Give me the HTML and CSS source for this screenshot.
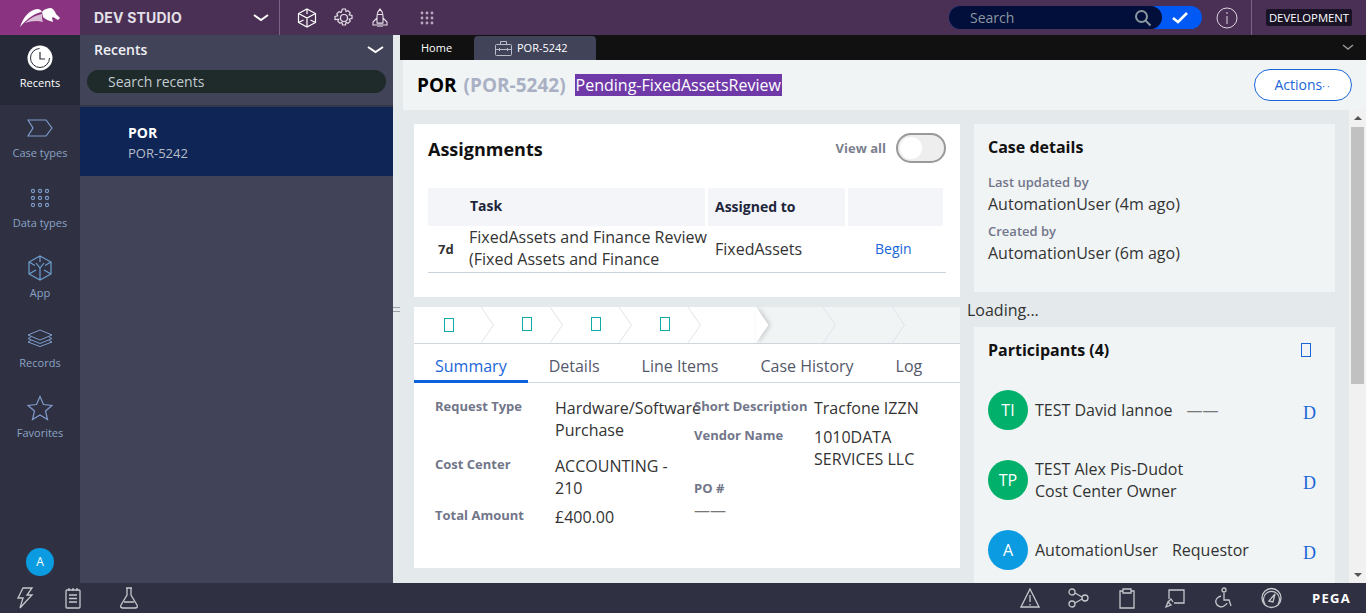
FILE: index.html
```html
<!DOCTYPE html>
<html lang="en">
<head>
	<meta charset="UTF-8">
	<title>POR-5242</title>
	<link rel="stylesheet" href="styles.css">
</head>
<body>
	<header class="topbar">
		<div class="logo">
			<svg width="40" height="20" viewBox="0 0 40 20"><path fill="#fff" d="M0 19C3 10 9 2 17 1c3 0 4 1 5 3-7 1-14 6-22 15z"/><path fill="#d9bcd6" d="M5 15c5-5 11-8 17-9 0 3 0 6 1 8-6-2-12-1-18 1z"/><path fill="#fff" d="M22 4c2-3 6-4 9-4 3 1 4 4 5 6l4 4-2 2-5-3-1 1 1 4c-4-1-8-3-10-5z"/></svg>
		</div>
		<div class="studio">
			<span class="studio-name">DEV STUDIO</span>
			<svg class="chev" width="16" height="8" viewBox="0 0 16 8"><path fill="none" stroke="#fff" stroke-width="2" d="M1 1l7 5 7-5"/></svg>
		</div>
		<div class="top-icons">
			<svg width="20" height="20" viewBox="0 0 20 20" fill="none" stroke="#fff" stroke-width="1.2"><path d="M10 1l8.5 4.5v9L10 19l-8.5-4.500v-9zM1.500 5.500L10 10l8.500-4.500M10 1v5M10 10v9M1.500 14.500l5-2.500M18.500 14.500l-5-2.500"/></svg>
			<svg width="20" height="20" viewBox="0 0 20 20" fill="none" stroke="#e8e0ea" stroke-width="1.2"><circle cx="10" cy="10" r="3.500"/><path d="M8.500 1h3l.5 2.500 2-.8 2.200 2.200-1 2 2.800.6v3l-2.800.6 1 2-2.200 2.200-2-1-.5 2.700h-3l-.5-2.700-2 1-2.200-2.200 1-2L1 11.500v-3l2.800-.6-1-2L5 3.700l2 .8z"/></svg>
			<svg width="18" height="20" viewBox="0 0 18 20" fill="none" stroke="#e8e0ea" stroke-width="1.100"><path d="M9 1c2 2 3 4 3 7v7H6V8c0-3 1-5 3-7zM6 10l-4 4v3h4M12 10l4 4v3h-4M7 15v4M11 15v4M9 15v4M6.500 6.500h5"/></svg>
		</div>
		<svg class="apps" width="14" height="14" viewBox="0 0 14 14" fill="#b9a9c0"><circle cx="2" cy="2" r="1.400"/><circle cx="7" cy="2" r="1.400"/><circle cx="12" cy="2" r="1.400"/><circle cx="2" cy="7" r="1.400"/><circle cx="7" cy="7" r="1.400"/><circle cx="12" cy="7" r="1.400"/><circle cx="2" cy="12" r="1.400"/><circle cx="7" cy="12" r="1.400"/><circle cx="12" cy="12" r="1.400"/></svg>
		<div class="top-search">
			<div class="top-search-box">
				<span>Search</span>
				<svg width="18" height="18" viewBox="0 0 18 18" fill="none" stroke="#8c97a0" stroke-width="2"><circle cx="7.500" cy="7.500" r="5.500"/><path d="M11.500 11.500l5 5"/></svg>
			</div>
			<svg class="top-search-check" width="16" height="12" viewBox="0 0 16 12" fill="none" stroke="#fff" stroke-width="2.600"><path d="M1 6l5 4 9-9"/></svg>
		</div>
		<svg class="info" width="22" height="22" viewBox="0 0 22 22" fill="none" stroke="#ddd5e0" stroke-width="1"><circle cx="11" cy="11" r="10"/><path d="M11 9v8M11 5v2"/></svg>
		<div class="env"><span>DEVELOPMENT</span></div>
	</header>

	<div class="middle">
		<nav class="rail">
			<a class="rail-item active">
				<svg width="26" height="26" viewBox="0 0 26 26"><circle cx="13" cy="13" r="12.500" fill="#fff"/><circle cx="13" cy="13" r="9.500" fill="none" stroke="#2a2e3c" stroke-width="1" stroke-dasharray="44 16"/><path fill="none" stroke="#2a2e3c" stroke-width="1.200" d="M13 7v7h5"/></svg>
				<span>Recents</span>
			</a>
			<a class="rail-item">
				<svg width="26" height="18" viewBox="0 0 26 18" fill="none" stroke="#7f9ccc" stroke-width="1.200"><path d="M1 1h18l6 8-6 8H1l5-8z"/></svg>
				<span>Case types</span>
			</a>
			<a class="rail-item">
				<svg width="20" height="20" viewBox="0 0 20 20" fill="none" stroke="#7f9ccc" stroke-width="1.100"><circle cx="3" cy="3" r="1.600"/><circle cx="10" cy="3" r="1.600"/><circle cx="17" cy="3" r="1.600"/><circle cx="3" cy="10" r="1.600"/><circle cx="10" cy="10" r="1.600"/><circle cx="17" cy="10" r="1.600"/><circle cx="3" cy="17" r="1.600"/><circle cx="10" cy="17" r="1.600"/><circle cx="17" cy="17" r="1.600"/></svg>
				<span>Data types</span>
			</a>
			<a class="rail-item">
				<svg width="26" height="26" viewBox="0 0 26 26" fill="none" stroke="#6e9ed0" stroke-width="1.200"><path d="M13 1l11 6v12l-11 6-11-6V7zM2 7l6 3.500M24 7l-6 3.500M13 1v6M13 13v12M2 19l7-4M24 19l-7-4M9 8l4 5 4-5"/></svg>
				<span>App</span>
			</a>
			<a class="rail-item">
				<svg width="26" height="18" viewBox="0 0 26 18" fill="none" stroke="#7f9ccc" stroke-width="1"><path d="M13 1l12 5-12 5L1 6zM4 8L1 9.500l12 5 12-5L22 8M4 11.500L1 13l12 4.500L25 13l-3-1.500"/></svg>
				<span>Records</span>
			</a>
			<a class="rail-item">
				<svg width="26" height="25" viewBox="0 0 26 25" fill="none" stroke="#7f9ccc" stroke-width="1.200"><path d="M13 1l3.500 8 8.500 1-6.500 5.500 2 8.500-7.500-4.500L5.500 24l2-8.500L1 10l8.500-1z"/></svg>
				<span>Favorites</span>
			</a>
			<div class="rail-user">A</div>
		</nav>

		<aside class="panel">
			<div class="panel-head">
				<h2>Recents</h2>
				<svg width="17" height="8" viewBox="0 0 17 8"><path fill="none" stroke="#fff" stroke-width="2" d="M1 1l7.500 5L16 1"/></svg>
			</div>
			<div class="panel-search">Search recents</div>
			<div class="panel-item">
				<strong>POR</strong>
				<span>POR-5242</span>
			</div>
		</aside>

		<div class="splitter"><i></i></div>

		<main class="main">
			<div class="tabbar">
				<a class="tab-home">Home</a>
				<a class="tab-case">
					<svg width="17" height="15" viewBox="0 0 17 15" fill="none" stroke="#b9bcc8" stroke-width="1"><rect x=".5" y="3.500" width="16" height="11" rx="1"/><path d="M5.500 3.500v-3h6v3M.5 8.500h4M12.500 8.500h4M4.500 7v3M12.500 7v3M4.500 8.500h8"/></svg>
					POR-5242
				</a>
				<svg class="tabbar-chev" width="12" height="6" viewBox="0 0 12 6"><path fill="none" stroke="#9a9a9a" stroke-width="1.400" d="M1 1l5 4 5-4"/></svg>
			</div>

			<div class="case-head">
				<h1>POR <span class="case-id">(POR-5242)</span></h1>
				<span class="case-status">Pending-FixedAssetsReview</span>
				<button class="actions">Actions<span class="dots">··</span></button>
			</div>

			<div class="case-body">
				<div class="content">
					<div class="col-left">
						<section class="card assignments">
							<div class="assign-head">
								<h3>Assignments</h3>
								<span class="view-all">View all</span>
								<span class="toggle"><i></i></span>
							</div>
							<div class="assign-table">
								<div class="th th-task">Task</div>
								<div class="th">Assigned to</div>
								<div class="th th-last"></div>
								<div class="td td-task">
									<b>7d</b>
									<span>FixedAssets and Finance Review (Fixed Assets and Finance</span>
								</div>
								<div class="td td-to">FixedAssets</div>
								<div class="td td-link"><a>Begin</a></div>
							</div>
						</section>

						<section class="card details">
							<div class="stages">
								<div class="stage first"><i class="tofu teal"></i><svg width="13" height="36" viewBox="0 0 13 36"><path fill="none" stroke="#dfe3e8" d="M0 0l12.500 18L0 36"/></svg></div>
								<div class="stage"><i class="tofu teal up"></i><svg width="13" height="36" viewBox="0 0 13 36"><path fill="none" stroke="#dfe3e8" d="M0 0l12.500 18L0 36"/></svg></div>
								<div class="stage"><i class="tofu teal up"></i><svg width="13" height="36" viewBox="0 0 13 36"><path fill="none" stroke="#dfe3e8" d="M0 0l12.500 18L0 36"/></svg></div>
								<div class="stage"><i class="tofu teal up"></i><svg width="13" height="36" viewBox="0 0 13 36"><path fill="none" stroke="#dfe3e8" d="M0 0l12.500 18L0 36"/></svg></div>
								<div class="stage current"><svg width="13" height="36" viewBox="0 0 13 36"><path fill="#fff" d="M0 0l12.500 18L0 36z"/></svg></div>
								<div class="stage todo next"><svg width="13" height="36" viewBox="0 0 13 36"><path fill="none" stroke="#dfe3e8" d="M0 0l12.500 18L0 36"/></svg></div>
								<div class="stage todo"><svg width="13" height="36" viewBox="0 0 13 36"><path fill="none" stroke="#dfe3e8" d="M0 0l12.500 18L0 36"/></svg></div>
							</div>
							<div class="tabs">
								<a class="on">Summary</a>
								<a>Details</a>
								<a>Line Items</a>
								<a>Case History</a>
								<a>Log</a>
							</div>
							<div class="summary">
								<div class="summary-col">
									<div class="field tall"><label>Request Type</label><div>Hardware/Software Purchase</div></div>
									<div class="field"><label>Cost Center</label><div>ACCOUNTING - 210</div></div>
									<div class="field"><label>Total Amount</label><div>£400.00</div></div>
								</div>
								<div class="summary-col">
									<div class="field"><label>Short Description</label><div>Tracfone IZZN</div></div>
									<div class="field"><label>Vendor Name</label><div>1010DATA SERVICES LLC</div></div>
									<div class="field stack"><label>PO #</label><div class="empty">——</div></div>
								</div>
							</div>
						</section>
					</div>

					<div class="col-right">
						<section class="side-card case-details">
							<h3>Case details</h3>
							<label>Last updated by</label>
							<p>AutomationUser (4m ago)</p>
							<label class="created">Created by</label>
							<p>AutomationUser (6m ago)</p>
						</section>
						<div class="loading">Loading...</div>
						<section class="side-card participants">
							<div class="part-head">
								<h3>Participants (4)</h3>
								<i class="tofu blue"></i>
							</div>
							<div class="part-row">
								<span class="avatar green">TI</span>
								<div class="part-text"><span class="part-name">TEST David Iannoe</span><span class="part-dash">——</span></div>
								<span class="part-d">D</span>
							</div>
							<div class="part-row">
								<span class="avatar green">TP</span>
								<div class="part-text">TEST Alex Pis-Dudot<br>Cost Center Owner</div>
								<span class="part-d">D</span>
							</div>
							<div class="part-row">
								<span class="avatar cyan">A</span>
								<div class="part-text"><span class="part-name">AutomationUser</span><span class="part-role">Requestor</span></div>
								<span class="part-d">D</span>
							</div>
						</section>
					</div>
				</div>
				<div class="scrollbar">
					<i class="arrow-up"></i>
					<div class="thumb"></div>
					<i class="arrow-down"></i>
				</div>
			</div>
		</main>
	</div>

	<footer class="bottombar">
		<div class="bottom-left">
			<svg width="20" height="22" viewBox="0 0 20 22" fill="none" stroke="#c5c7cc" stroke-width="1.300"><path d="M8 1h9l-5 7h5L5 21l3-10H3z"/></svg>
			<svg width="20" height="22" viewBox="0 0 20 22" fill="none" stroke="#c5c7cc" stroke-width="1.300"><rect x="3" y="3" width="14" height="18" rx="1"/><path d="M6 1v3M10 1v3M14 1v3M6 8h8M6 11.500h8M6 15h8"/></svg>
			<svg width="20" height="22" viewBox="0 0 20 22" fill="none" stroke="#c5c7cc" stroke-width="1.300"><path d="M7 1h6M8 1v7L2 18c-1 2 0 3 2 3h12c2 0 3-1 2-3L12 8V1M5 15h10"/></svg>
		</div>
		<div class="bottom-right">
			<svg width="20" height="22" viewBox="0 0 20 22" fill="none" stroke="#c5c7cc" stroke-width="1.300"><path d="M10 2l9 18H1zM10 8v7M10 17v1.500"/></svg>
			<svg width="21" height="22" viewBox="0 0 21 22" fill="none" stroke="#c5c7cc" stroke-width="1.300"><circle cx="4" cy="5" r="3"/><circle cx="17" cy="11" r="3"/><circle cx="4" cy="17" r="3"/><path d="M7 6l7 4M7 16l7-4"/></svg>
			<svg width="20" height="22" viewBox="0 0 20 22" fill="none" stroke="#c5c7cc" stroke-width="1.300"><path d="M6 4H3v17h14V4h-3M6 2h8v4H6z"/></svg>
			<svg width="20" height="22" viewBox="0 0 20 22" fill="none" stroke="#c5c7cc" stroke-width="1.300"><path d="M4 12V3h15v13H9M1 20l2-5 3 3zM3 15l3-3 2 3"/></svg>
			<svg width="20" height="22" viewBox="0 0 20 22" fill="none" stroke="#c5c7cc" stroke-width="1.300"><circle cx="11" cy="3" r="2"/><path d="M11 6v7h5l2 6M8 9c-4 1-6 4-5 7s5 5 8 3 3-3 3-3"/></svg>
			<svg width="21" height="22" viewBox="0 0 21 22" fill="none" stroke="#c5c7cc" stroke-width="1.300"><circle cx="10.500" cy="11" r="9.500"/><path d="M4 17a8 8 0 1 1 13 0"/><path d="M8 14l6-7-2 8z"/></svg>
			<span class="pega">PEGA</span>
		</div>
	</footer>
</body>
</html>
```

FILE: styles.css
```css
* {
	margin: 0;
	padding: 0;
	box-sizing: border-box;
}
html,
body {
	height: 613px;
	overflow: hidden;
}
body {
	display: flex;
	flex-direction: column;
	font: 16px/22px "Open Sans", "Liberation Sans", sans-serif;
	color: #333;
	background: #e4e9eb;
}
svg {
	display: block;
	flex: none;
}

/* top bar */
.topbar {
	display: flex;
	align-items: center;
	height: 35px;
	flex: none;
	background: #4a3054;
}
.logo {
	width: 80px;
	height: 35px;
	display: flex;
	align-items: center;
	justify-content: center;
	background: #8a3380;
}
.studio {
	width: 200px;
	height: 35px;
	padding: 0 10px 0 14px;
	display: flex;
	align-items: center;
	justify-content: space-between;
	border-right: 1px solid #7a6484;
}
.studio-name {
	font: 700 14px "Inter", "Open Sans", sans-serif;
	letter-spacing: .2px;
	color: #e4e0e8;
}
.top-icons {
	display: flex;
	align-items: center;
	gap: 17px;
	margin-left: 17px;
}
.apps {
	margin-left: 31px;
}
.top-search {
	display: flex;
	align-items: center;
	justify-content: space-between;
	width: 253px;
	height: 23px;
	margin-left: auto;
	padding-right: 14px;
	background: #0059f5;
	border-radius: 12px;
}
.top-search-box {
	display: flex;
	align-items: center;
	justify-content: space-between;
	width: 213px;
	height: 23px;
	padding: 0 10px 0 21px;
	background: #020f3a;
	border-radius: 12px;
	font-size: 14px;
	color: #8c97a0;
}
.info {
	margin-left: 14px;
}
.env {
	margin-left: 13px;
	width: 115px;
	height: 35px;
	padding-left: 14px;
	display: flex;
	align-items: center;
	border-left: 1px solid #7a6484;
}
.env span {
	width: 86px;
	height: 17px;
	font-size: 11.3px;
	line-height: 17px;
	text-align: center;
	color: #fff;
	background: #1a1225;
	border-radius: 2px;
}

/* middle */
.middle {
	display: flex;
	flex: 1;
	min-height: 0;
}
.rail {
	display: flex;
	flex-direction: column;
	width: 80px;
	flex: none;
	background: #2f3142;
}
.rail-item {
	display: flex;
	flex-direction: column;
	align-items: center;
	justify-content: flex-end;
	height: 70px;
	padding-bottom: 14px;
	gap: 4px;
	font-size: 11px;
	line-height: 16px;
	color: #8aa3c4;
}
.rail-item svg {
	height: 26px;
}
.rail-item.active {
	background: #262a38;
	color: #fff;
}
.rail-user {
	width: 28px;
	height: 28px;
	margin: auto auto 7px;
	border-radius: 50%;
	background: #0a9be0;
	color: #fff;
	font-size: 12px;
	line-height: 28px;
	text-align: center;
}
.panel {
	width: 313px;
	flex: none;
	background: #414359;
	color: #fff;
}
.panel-head {
	display: flex;
	align-items: center;
	justify-content: space-between;
	height: 30px;
	padding: 0 9px 0 14px;
}
.panel-head h2 {
	font-size: 14px;
	font-weight: 600;
	color: #f0f0f4;
}
.panel-search {
	height: 23px;
	margin: 5px 7px 0;
	padding-left: 21px;
	background: #1f2a2b;
	border-radius: 12px;
	font-size: 14px;
	line-height: 23px;
	color: #c3ccd0;
}
.panel-item {
	display: flex;
	flex-direction: column;
	justify-content: center;
	height: 71px;
	margin-top: 12px;
	padding: 2px 0 0 48px;
	background: #0f2556;
	border-top: 2px solid #34374a;
	font-size: 13px;
	line-height: 20px;
	color: #b8bec8;
}
.panel-item strong {
	font-size: 14px;
	color: #fff;
}
.splitter {
	width: 7px;
	flex: none;
	display: flex;
	align-items: center;
	justify-content: center;
	background: #e4e9eb;
}
.splitter i {
	width: 7px;
	height: 5px;
	border-top: 1px solid #9aa0a8;
	border-bottom: 1px solid #9aa0a8;
}

/* main */
.main {
	flex: 1;
	min-width: 0;
	display: flex;
	flex-direction: column;
}
.tabbar {
	display: flex;
	align-items: flex-end;
	height: 25px;
	flex: none;
	background: #111;
	color: #fff;
	font-size: 11px;
}
.tab-home {
	width: 74px;
	padding-left: 21px;
	line-height: 24px;
}
.tab-case {
	display: flex;
	align-items: center;
	gap: 5px;
	width: 122px;
	height: 24px;
	padding-left: 21px;
	background: #414359;
	border-radius: 4px 4px 0 0;
}
.tabbar-chev {
	margin: 0 12px 10px auto;
}
.case-head {
	display: flex;
	align-items: center;
	height: 50px;
	flex: none;
	margin-left: 3px;
	padding: 0 14px;
	background: #f0f4f5;
}
.case-head h1 {
	font-size: 19px;
	font-weight: 700;
	color: #000;
}
.case-id {
	margin-left: 2px;
	color: #aab0c4;
}
.case-status {
	margin-left: 9px;
	padding: 0 1px;
	height: 22px;
	font-size: 16px;
	line-height: 22px;
	color: #fff;
	background: #6f3aa8;
}
.actions {
	width: 98px;
	height: 32px;
	margin-left: auto;
	padding-bottom: 2px;
	border: 1px solid #1a66d8;
	border-radius: 16px;
	background: #fff;
	font: 14px "Open Sans", sans-serif;
	color: #1a66d8;
}
.dots {
	font-size: 10px;
	letter-spacing: 2px;
}
.case-body {
	flex: 1;
	min-height: 0;
	display: flex;
}
.content {
	flex: 1;
	min-width: 0;
	display: flex;
	gap: 14px;
	padding: 14px 14px 0;
	overflow: hidden;
}
.col-left {
	width: 546px;
	flex: none;
}
.col-right {
	flex: 1;
	min-width: 0;
}
.card {
	background: #fff;
}
.assignments {
	height: 173px;
	padding: 9px 14px 0;
}
.assign-head {
	display: flex;
	align-items: center;
	height: 30px;
	margin-bottom: 25px;
}
.assign-head h3 {
	margin: 2px auto 0 0;
	font-size: 18px;
	font-weight: 700;
	color: #111;
}
.view-all {
	font-size: 13px;
	font-weight: 700;
	color: #7b7f8e;
}
.toggle {
	width: 50px;
	height: 30px;
	margin-left: 10px;
	padding: 2px;
	border: 2px solid #999;
	border-radius: 15px;
	background: #eee;
}
.toggle i {
	display: block;
	width: 22px;
	height: 22px;
	border-radius: 50%;
	background: #fff;
}
.assign-table {
	display: grid;
	grid-template-columns: 277px 137px 98px;
	column-gap: 3px;
	width: 518px;
	border-bottom: 1px solid #c9d3dc;
}
.th {
	height: 38px;
	padding-left: 7px;
	background: #f3f5f9;
	font-size: 14px;
	font-weight: 700;
	line-height: 38px;
	color: #22253a;
}
.th-task {
	padding-left: 42px;
	line-height: 35px;
}
.th-last {
	margin-right: 3px;
}
.td {
	height: 46px;
}
.td-task {
	display: flex;
	align-items: center;
	width: 290px;
	padding-bottom: 2px;
}
.td-task b {
	width: 41px;
	flex: none;
	padding: 2px 0 0 10px;
	font-size: 13px;
}
.td-task span {
	width: 249px;
}
.td-to {
	padding-left: 7px;
	line-height: 46px;
}
.td-link {
	padding-left: 27px;
	font-size: 14px;
	line-height: 46px;
	color: #1a66d8;
}
.details {
	height: 261px;
	margin-top: 10px;
}
.stages {
	display: flex;
	height: 37px;
	background: #f0f4f5;
	border-bottom: 1px solid #cfd6dc;
}
.stage {
	display: flex;
	align-items: flex-start;
	justify-content: flex-end;
	width: 69px;
	height: 36px;
	background: #fff;
}
.stage.first {
	width: 80px;
}
.stage.current {
	width: 55px;
}
.stage.current svg {
	margin-right: -13px;
	filter: drop-shadow(2px 0 2px rgba(0, 0, 0, .18));
}
.stage.todo {
	background: none;
}
.stage.next {
	width: 80px;
}
.tofu {
	display: block;
	width: 10px;
	height: 14px;
	border: 1px solid;
}
.teal {
	border-color: #12aaa8;
	margin: 11px 27px 0 0;
}
.teal.up {
	margin: 10px 18px 0 0;
}
.blue {
	border-color: #1a66d8;
}
.tabs {
	display: flex;
	height: 39px;
	border-bottom: 1px solid #cfd6dc;
	color: #55586a;
}
.tabs a {
	height: 39px;
	padding: 11px 21px 0;
}
.tabs .on {
	color: #1a66d8;
	border-bottom: 3px solid #0a63dc;
}
.summary {
	display: flex;
	padding: 13px 0 0 21px;
}
.summary-col {
	width: 259px;
}
.field {
	display: flex;
	margin-bottom: 6px;
}
.field.tall {
	margin-bottom: 13px;
}
.field label {
	width: 120px;
	flex: none;
	font-size: 13px;
	font-weight: 700;
	line-height: 20px;
	color: #72768a;
}
.field div {
	width: 119px;
	flex: none;
	margin-top: 1px;
}
.stack {
	display: block;
}
.empty {
	color: #777;
}
.side-card {
	background: #f0f4f5;
	padding: 0 14px;
}
.side-card h3 {
	font-size: 16px;
	font-weight: 700;
	color: #111;
}
.case-details {
	height: 168px;
	padding-top: 12px;
}
.case-details label {
	display: block;
	margin-top: 15px;
	font-size: 13px;
	font-weight: 600;
	line-height: 18px;
	color: #72768a;
}
.case-details p {
	margin-top: 2px;
}
.case-details .created {
	margin-top: 7px;
}
.loading {
	height: 35px;
	margin-left: -7px;
	padding-top: 7px;
}
.participants {
	height: 300px;
}
.part-head {
	display: flex;
	align-items: center;
	justify-content: space-between;
	height: 46px;
	padding-right: 10px;
	margin-bottom: 17px;
}
.part-row {
	display: flex;
	align-items: center;
	height: 40px;
	margin-bottom: 30px;
}
.avatar {
	width: 40px;
	height: 40px;
	flex: none;
	border-radius: 50%;
	color: #fff;
	line-height: 40px;
	text-align: center;
}
.green {
	background: #00b06b;
}
.cyan {
	background: #0a9be0;
}
.part-text {
	flex: 1;
	margin-left: 7px;
}
.part-dash {
	margin-left: 14px;
	color: #777;
}
.part-role {
	margin-left: 14px;
}
.part-d {
	margin: 6px 5px 0 0;
	font: 18px "Liberation Serif", serif;
	color: #1a66d8;
}

/* scrollbar */
.scrollbar {
	display: flex;
	flex-direction: column;
	align-items: center;
	width: 17px;
	flex: none;
	background: #f1f1f1;
}
.arrow-up,
.arrow-down {
	width: 0;
	height: 0;
	border-left: 4px solid transparent;
	border-right: 4px solid transparent;
}
.arrow-up {
	margin: 6px 0 7px;
	border-bottom: 4px solid #555;
}
.arrow-down {
	margin-top: auto;
	margin-bottom: 6px;
	border-top: 4px solid #555;
}
.thumb {
	width: 13px;
	height: 257px;
	background: #c1c1c1;
}

/* bottom bar */
.bottombar {
	display: flex;
	align-items: center;
	justify-content: space-between;
	height: 30px;
	flex: none;
	padding: 0 15px;
	background: #2f3142;
}
.bottom-left {
	display: flex;
	gap: 28px;
}
.bottom-left svg:last-child {
	margin-left: 8px;
}
.bottom-right {
	display: flex;
	align-items: center;
	gap: 28px;
}
.pega {
	margin-left: 2px;
	font-size: 13px;
	font-weight: 700;
	letter-spacing: 1.300px;
	color: #fff;
}
```
